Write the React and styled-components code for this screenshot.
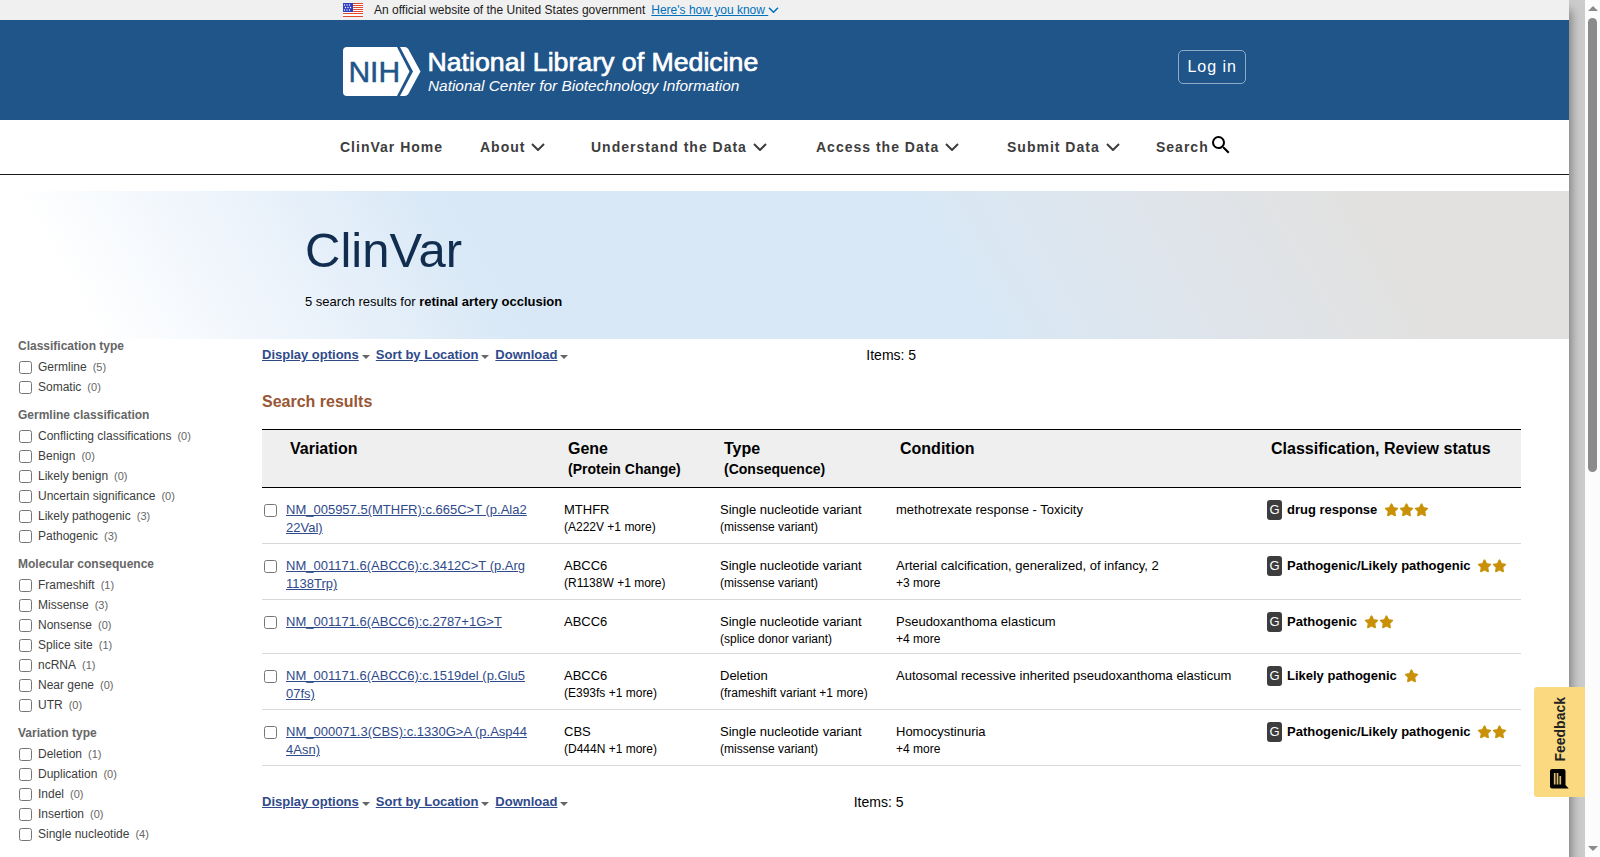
import styled, { createGlobalStyle } from 'styled-components';
import { MdSearch } from 'react-icons/md';

const menu = [
  { label: 'ClinVar Home' },
  { label: 'About', dropdown: true },
  { label: 'Understand the Data', dropdown: true },
  { label: 'Access the Data', dropdown: true },
  { label: 'Submit Data', dropdown: true },
];

const filters = [
  { title: 'Classification type', options: [['Germline', 5], ['Somatic', 0]] },
  {
    title: 'Germline classification',
    options: [
      ['Conflicting classifications', 0],
      ['Benign', 0],
      ['Likely benign', 0],
      ['Uncertain significance', 0],
      ['Likely pathogenic', 3],
      ['Pathogenic', 3],
    ],
  },
  {
    title: 'Molecular consequence',
    options: [
      ['Frameshift', 1],
      ['Missense', 3],
      ['Nonsense', 0],
      ['Splice site', 1],
      ['ncRNA', 1],
      ['Near gene', 0],
      ['UTR', 0],
    ],
  },
  {
    title: 'Variation type',
    options: [
      ['Deletion', 1],
      ['Duplication', 0],
      ['Indel', 0],
      ['Insertion', 0],
      ['Single nucleotide', 4],
    ],
  },
];

const results = [
  {
    variation: 'NM_005957.5(MTHFR):c.665C>T (p.Ala222Val)',
    gene: 'MTHFR',
    protein: '(A222V +1 more)',
    type: 'Single nucleotide variant',
    consequence: '(missense variant)',
    condition: 'methotrexate response - Toxicity',
    classification: 'drug response',
    stars: 3,
  },
  {
    variation: 'NM_001171.6(ABCC6):c.3412C>T (p.Arg1138Trp)',
    gene: 'ABCC6',
    protein: '(R1138W +1 more)',
    type: 'Single nucleotide variant',
    consequence: '(missense variant)',
    condition: 'Arterial calcification, generalized, of infancy, 2',
    more: '+3 more',
    classification: 'Pathogenic/Likely pathogenic',
    stars: 2,
  },
  {
    variation: 'NM_001171.6(ABCC6):c.2787+1G>T',
    gene: 'ABCC6',
    type: 'Single nucleotide variant',
    consequence: '(splice donor variant)',
    condition: 'Pseudoxanthoma elasticum',
    more: '+4 more',
    classification: 'Pathogenic',
    stars: 2,
  },
  {
    variation: 'NM_001171.6(ABCC6):c.1519del (p.Glu507fs)',
    gene: 'ABCC6',
    protein: '(E393fs +1 more)',
    type: 'Deletion',
    consequence: '(frameshift variant +1 more)',
    condition: 'Autosomal recessive inherited pseudoxanthoma elasticum',
    classification: 'Likely pathogenic',
    stars: 1,
  },
  {
    variation: 'NM_000071.3(CBS):c.1330G>A (p.Asp444Asn)',
    gene: 'CBS',
    protein: '(D444N +1 more)',
    type: 'Single nucleotide variant',
    consequence: '(missense variant)',
    condition: 'Homocystinuria',
    more: '+4 more',
    classification: 'Pathogenic/Likely pathogenic',
    stars: 2,
  },
];

function Flag() {
  return (
    <svg width="20" height="14" viewBox="0 0 20 14" aria-hidden="true">
      <rect width="20" height="14" fill="#fff" />
      {[0, 2, 4, 6, 8, 10, 13].map((y) => (
        <rect key={y} y={y} width="20" height="1" fill="#e2492f" />
      ))}
      <rect width="10" height="9" fill="#2f3fc0" />
      {[2, 4.5, 7].map((y) =>
        [1.5, 4, 6.5].map((x) => (
          <circle key={`${x}-${y}`} cx={x + (y === 4.5 ? 1 : 0)} cy={y} r="0.7" fill="#fff" />
        ))
      )}
    </svg>
  );
}

function Logo() {
  return (
    <svg width="416" height="50" viewBox="0 0 416 50" role="img" aria-label="NIH National Library of Medicine">
      <path d="M4 0H54L66.5 24.5L54 49H4Q0 49 0 45V4Q0 0 4 0Z" fill="#fff" />
      <path d="M57 0H61.5Q64 0 65.3 2L77.5 24.5L65.3 47Q64 49 61.5 49H57L70 24.5Z" fill="#fff" />
      <g fontFamily="'Liberation Sans', Arial, sans-serif" fill="#fff">
        <text x="5.4" y="35" fontSize="30" fill="#20558a" stroke="#20558a" strokeWidth="0.5">NIH</text>
        <text x="84.5" y="24" fontSize="26.7" stroke="#fff" strokeWidth="0.7">National Library of Medicine</text>
        <text x="85" y="44" fontSize="15.4" fontStyle="italic">National Center for Biotechnology Information</text>
      </g>
    </svg>
  );
}

function Chevron({ width = 14, height = 8 }) {
  return (
    <svg width={width} height={height} viewBox="0 0 14 8" aria-hidden="true">
      <path d="M1 1L7 7L13 1" fill="none" stroke="currentColor" strokeWidth="2" />
    </svg>
  );
}

function Star() {
  return (
    <svg width="15" height="14" viewBox="0 0 15 14" aria-hidden="true">
      <path
        d="M7.5 1.2L9.3 4.9L13.3 5.5L10.4 8.3L11.1 12.4L7.5 10.5L3.9 12.4L4.6 8.3L1.7 5.5L5.7 4.9Z"
        fill="#c89108"
        stroke="#c89108"
        strokeWidth="1.7"
        strokeLinejoin="round"
      />
    </svg>
  );
}

function FeedbackIcon() {
  return (
    <svg width="19" height="20" viewBox="0 0 19 20" aria-hidden="true">
      <path d="M2 0H13.5Q15.5 0 15.5 2V16L18.7 19.6H2Q0 19.6 0 17.6V2Q0 0 2 0Z" fill="#000" />
      <path d="M4.7 4V15.6M7.5 4V15.6M10.3 7V15.6" stroke="#d8bb70" strokeWidth="1.7" />
    </svg>
  );
}

function Toolbar({ split }) {
  return (
    <ToolbarGrid $split={split}>
      <Options>
        {['Display options', 'Sort by Location', 'Download'].map((name) => (
          <Option key={name}>
            <a href="#options">{name}</a>
            <Caret />
          </Option>
        ))}
      </Options>
      <ItemCount>Items: 5</ItemCount>
    </ToolbarGrid>
  );
}

function Filters() {
  return (
    <Sidebar>
      {filters.map((group) => (
        <FilterGroup key={group.title}>
          <FilterTitle>{group.title}</FilterTitle>
          {group.options.map(([name, count]) => (
            <FilterLabel key={name}>
              <input type="checkbox" />
              {name}
              <FilterCount>({count})</FilterCount>
            </FilterLabel>
          ))}
        </FilterGroup>
      ))}
    </Sidebar>
  );
}

function ResultRow({ item }) {
  return (
    <tr>
      <Cell>
        <RowCheck type="checkbox" aria-label={item.variation} />
      </Cell>
      <Cell>
        <VariationLink href="#variation">{item.variation}</VariationLink>
      </Cell>
      <Cell>
        {item.gene}
        {item.protein && <Detail>{item.protein}</Detail>}
      </Cell>
      <Cell>
        {item.type}
        <Detail>{item.consequence}</Detail>
      </Cell>
      <Cell>
        {item.condition}
        {item.more && <Detail>{item.more}</Detail>}
      </Cell>
      <Cell>
        <Classification>
          <Badge>G</Badge>
          <strong>{item.classification}</strong>
          <Stars>
            {Array.from({ length: item.stars }, (_, i) => <Star key={i} />)}
          </Stars>
        </Classification>
      </Cell>
    </tr>
  );
}

function App() {
  return (
    <>
      <GlobalStyle />
      <Sheet>
        <GovBanner>
          <Container $indent="20px">
            <Flag />
            <GovText>An official website of the United States government</GovText>
            <GovLink href="#how">
              <span>Here's how you know&nbsp;</span>
              <Chevron width={11} height={6} />
            </GovLink>
          </Container>
        </GovBanner>

        <Header>
          <Container $indent="20px">
            <Logo />
            <LoginLink href="#login">Log in</LoginLink>
          </Container>
        </Header>

        <Nav>
          <Container $indent="17px">
            <Menu>
              {menu.map((item) =>
                item.dropdown ? (
                  <MenuButton key={item.label} type="button">
                    {item.label}
                    <Chevron />
                  </MenuButton>
                ) : (
                  <MenuLink key={item.label} href="#home">{item.label}</MenuLink>
                )
              )}
              <SearchLink href="#search">
                Search
                <MdSearch size={24} color="#000" />
              </SearchLink>
            </Menu>
          </Container>
        </Nav>

        <Hero>
          <HeroInner>
            <Title>ClinVar</Title>
            <Summary>
              5 search results for <b>retinal artery occlusion</b>
            </Summary>
          </HeroInner>
        </Hero>

        <Content>
          <Filters />
          <Main>
            <Toolbar split="48%" />
            <ResultsTitle>Search results</ResultsTitle>
            <Table>
              <colgroup>
                <Col $width="24px" />
                <Col $width="278px" />
                <Col $width="156px" />
                <Col $width="176px" />
                <Col />
                <Col $width="254px" />
              </colgroup>
              <thead>
                <tr>
                  <HeadCell aria-label="Select" />
                  <HeadCell>Variation</HeadCell>
                  <HeadCell>Gene<SubHead>(Protein Change)</SubHead></HeadCell>
                  <HeadCell>Type<SubHead>(Consequence)</SubHead></HeadCell>
                  <HeadCell>Condition</HeadCell>
                  <HeadCell>Classification, Review status</HeadCell>
                </tr>
              </thead>
              <tbody>
                {results.map((item) => <ResultRow key={item.variation} item={item} />)}
              </tbody>
            </Table>
            <Toolbar split="47%" />
          </Main>
        </Content>
      </Sheet>

      <Feedback type="button">
        <span>Feedback</span>
        <FeedbackIcon />
      </Feedback>

      <ScrollTrack aria-hidden="true">
        <ScrollArrow $up />
        <ScrollThumb />
        <ScrollArrow />
      </ScrollTrack>
    </>
  );
}

export default App;

const GlobalStyle = createGlobalStyle`
    * {
        box-sizing: border-box;
    }

    body {
        margin: 0;
        background-color: #ccc;
        color: #000;
        font-family: "Liberation Sans", Arial, Helvetica, sans-serif;
        font-size: 13px;
    }

    svg {
        display: block;
        flex-shrink: 0;
    }
`;

const Sheet = styled.div`
    min-height: 100vh;
    margin-right: 31px;
    background-color: #fff;
    box-shadow: 2px 10px 10px #777;
`;

const Container = styled.div`
    display: flex;
    align-items: center;
    width: 100%;
    max-width: 923px;
    margin: 0 auto;
    padding-left: ${(props) => props.$indent};
`;

const GovBanner = styled.div`
    display: flex;
    height: 20px;
    background-color: #f0f0f0;
    color: #1b1b1b;
    font-size: 12px;
`;

const GovText = styled.span`
    margin: 0 6px 0 11px;
`;

const GovLink = styled.a`
    display: flex;
    align-items: center;
    color: #0071bc;
    text-decoration: none;

    span {
    text-decoration: underline;
    }
`;

const Header = styled.header`
    display: flex;
    height: 100px;
    padding-top: 4px;
    background-color: #20558a;
`;

const LoginLink = styled.a`
    margin: 0 0 10px auto;
    padding: 7px 8px;
    border: 1px solid #8faac5;
    border-radius: 5px;
    color: #fff;
    font-size: 16px;
    line-height: 18px;
    letter-spacing: 1px;
    text-decoration: none;
`;

const Nav = styled.nav`
    display: flex;
    height: 55px;
    border-bottom: 1px solid #1b1b1b;
`;

const Menu = styled.div`
    display: grid;
    grid-template-columns: 140px 111px 225px 191px 149px auto;
    align-items: center;
    justify-items: start;
`;

const MenuLink = styled.a`
    display: flex;
    align-items: center;
    color: #3d3d3d;
    font-size: 14px;
    font-weight: bold;
    letter-spacing: 1px;
    text-decoration: none;
`;

const MenuButton = styled.button`
    display: flex;
    align-items: center;
    gap: 6px;
    padding: 0;
    border: 0;
    background: none;
    color: #3d3d3d;
    font-family: inherit;
    font-size: 14px;
    font-weight: bold;
    letter-spacing: 1px;
    white-space: nowrap;
`;

const SearchLink = styled(MenuLink)`
    svg {
    margin-bottom: 4px;
    }
`;

const Hero = styled.section`
    margin-top: 16px;
    background: linear-gradient(60deg, #fff 6%, #ecf3fb 19%, #d8e8f6 32%, #d8e8f6 59%, #dfe4ea 75%, #e2e1df 88%);
`;

const HeroInner = styled.div`
    max-width: 959px;
    margin: 0 auto;
    padding: 32px 0 28px;
`;

const Title = styled.h1`
    margin: 0 0 16px;
    color: #112e51;
    font-size: 49px;
    font-weight: normal;
    line-height: 54px;
`;

const Summary = styled.p`
    margin: 0;
    line-height: 18px;
`;

const Content = styled.div`
    display: grid;
    grid-template-columns: 262px 1fr;
`;

const Sidebar = styled.aside`
    padding-left: 18px;
    color: #3d3d3d;
    font-size: 12px;
`;

const FilterGroup = styled.div`
    margin-bottom: 11px;
`;

const FilterTitle = styled.h3`
    margin: 0 0 4px;
    color: #666;
    font-size: 12px;
    line-height: 14px;
`;

const FilterLabel = styled.label`
    display: flex;
    align-items: center;
    height: 20px;

    input {
    margin: 0 6px 0 1px;
    }
`;

const FilterCount = styled.span`
    margin-left: 6px;
    color: #666;
    font-size: 11px;
`;

const Main = styled.main`
    padding: 8px 48px 32px 0;
`;

const ToolbarGrid = styled.div`
    display: grid;
    grid-template-columns: ${(props) => props.$split} 1fr;
    align-items: center;
    line-height: 16px;
`;

const Options = styled.div`
    display: flex;
    gap: 6px;
`;

const Option = styled.div`
    display: flex;
    align-items: center;
    gap: 3px;

    a {
    color: #2f4a8b;
    font-weight: bold;
    }
`;

const Caret = styled.span`
    margin-top: 3px;
    border-top: 4px solid #666;
    border-left: 4px solid transparent;
    border-right: 4px solid transparent;
`;

const ItemCount = styled.span`
    font-size: 14px;
`;

const ResultsTitle = styled.h2`
    margin: 29px 0 17px;
    color: #985735;
    font-size: 16px;
    line-height: 20px;
`;

const Table = styled.table`
    width: 100%;
    margin-bottom: 28px;
    border-collapse: separate;
    border-spacing: 0;
    table-layout: fixed;
`;

const Col = styled.col`
    width: ${(props) => props.$width || 'auto'};
`;

const HeadCell = styled.th`
    padding: 8px 0 7px 4px;
    border-top: 1px solid #000;
    border-bottom: 1px solid #000;
    background-color: #efefef;
    font-size: 16px;
    line-height: 21px;
    text-align: left;
    vertical-align: top;
`;

const SubHead = styled.div`
    font-size: 14px;
`;

const Cell = styled.td`
    padding: 13px 0 6px;
    border-bottom: 1px solid #d8d8d8;
    line-height: 18px;
    vertical-align: top;
`;

const Detail = styled.div`
    font-size: 12px;
    line-height: 16px;
`;

const RowCheck = styled.input`
    display: block;
    margin: 3px 0 0 2px;
`;

const VariationLink = styled.a`
    display: block;
    max-width: 244px;
    color: #2f4a8b;
    word-break: break-all;
`;

const Classification = styled.div`
    display: flex;
    align-items: center;
    height: 18px;
    white-space: nowrap;
`;

const Badge = styled.span`
    width: 15px;
    margin-right: 5px;
    border-radius: 3px;
    background-color: #3d3d3d;
    color: #fff;
    line-height: 20px;
    text-align: center;
`;

const Stars = styled.span`
    display: flex;
    margin-left: 7px;
`;

const Feedback = styled.button`
    position: fixed;
    right: 15px;
    bottom: 60px;
    display: flex;
    flex-direction: column;
    align-items: center;
    gap: 7px;
    width: 51px;
    padding: 10px 0 8px;
    border: 0;
    border-radius: 3px 0 0 3px;
    background-color: #fbd981;
    color: #212121;
    font-family: inherit;
    font-size: 14px;
    font-weight: bold;

    span {
    writing-mode: vertical-rl;
    transform: rotate(180deg);
    }
`;

const ScrollTrack = styled.div`
    position: fixed;
    top: 0;
    right: 0;
    bottom: 0;
    display: flex;
    flex-direction: column;
    align-items: center;
    width: 15px;
    padding: 6px 0;
    background-color: #fcfcfc;
`;

const ScrollArrow = styled.span`
    margin-top: ${(props) => (props.$up ? '0' : 'auto')};
    border-left: 5px solid transparent;
    border-right: 5px solid transparent;
    border-bottom: ${(props) => (props.$up ? '5px solid #8b8b8b' : '0')};
    border-top: ${(props) => (props.$up ? '0' : '5px solid #8b8b8b')};
`;

const ScrollThumb = styled.div`
    width: 9px;
    height: 53vh;
    margin-top: 7px;
    border-radius: 5px;
    background-color: #8b8b8b;
`;
